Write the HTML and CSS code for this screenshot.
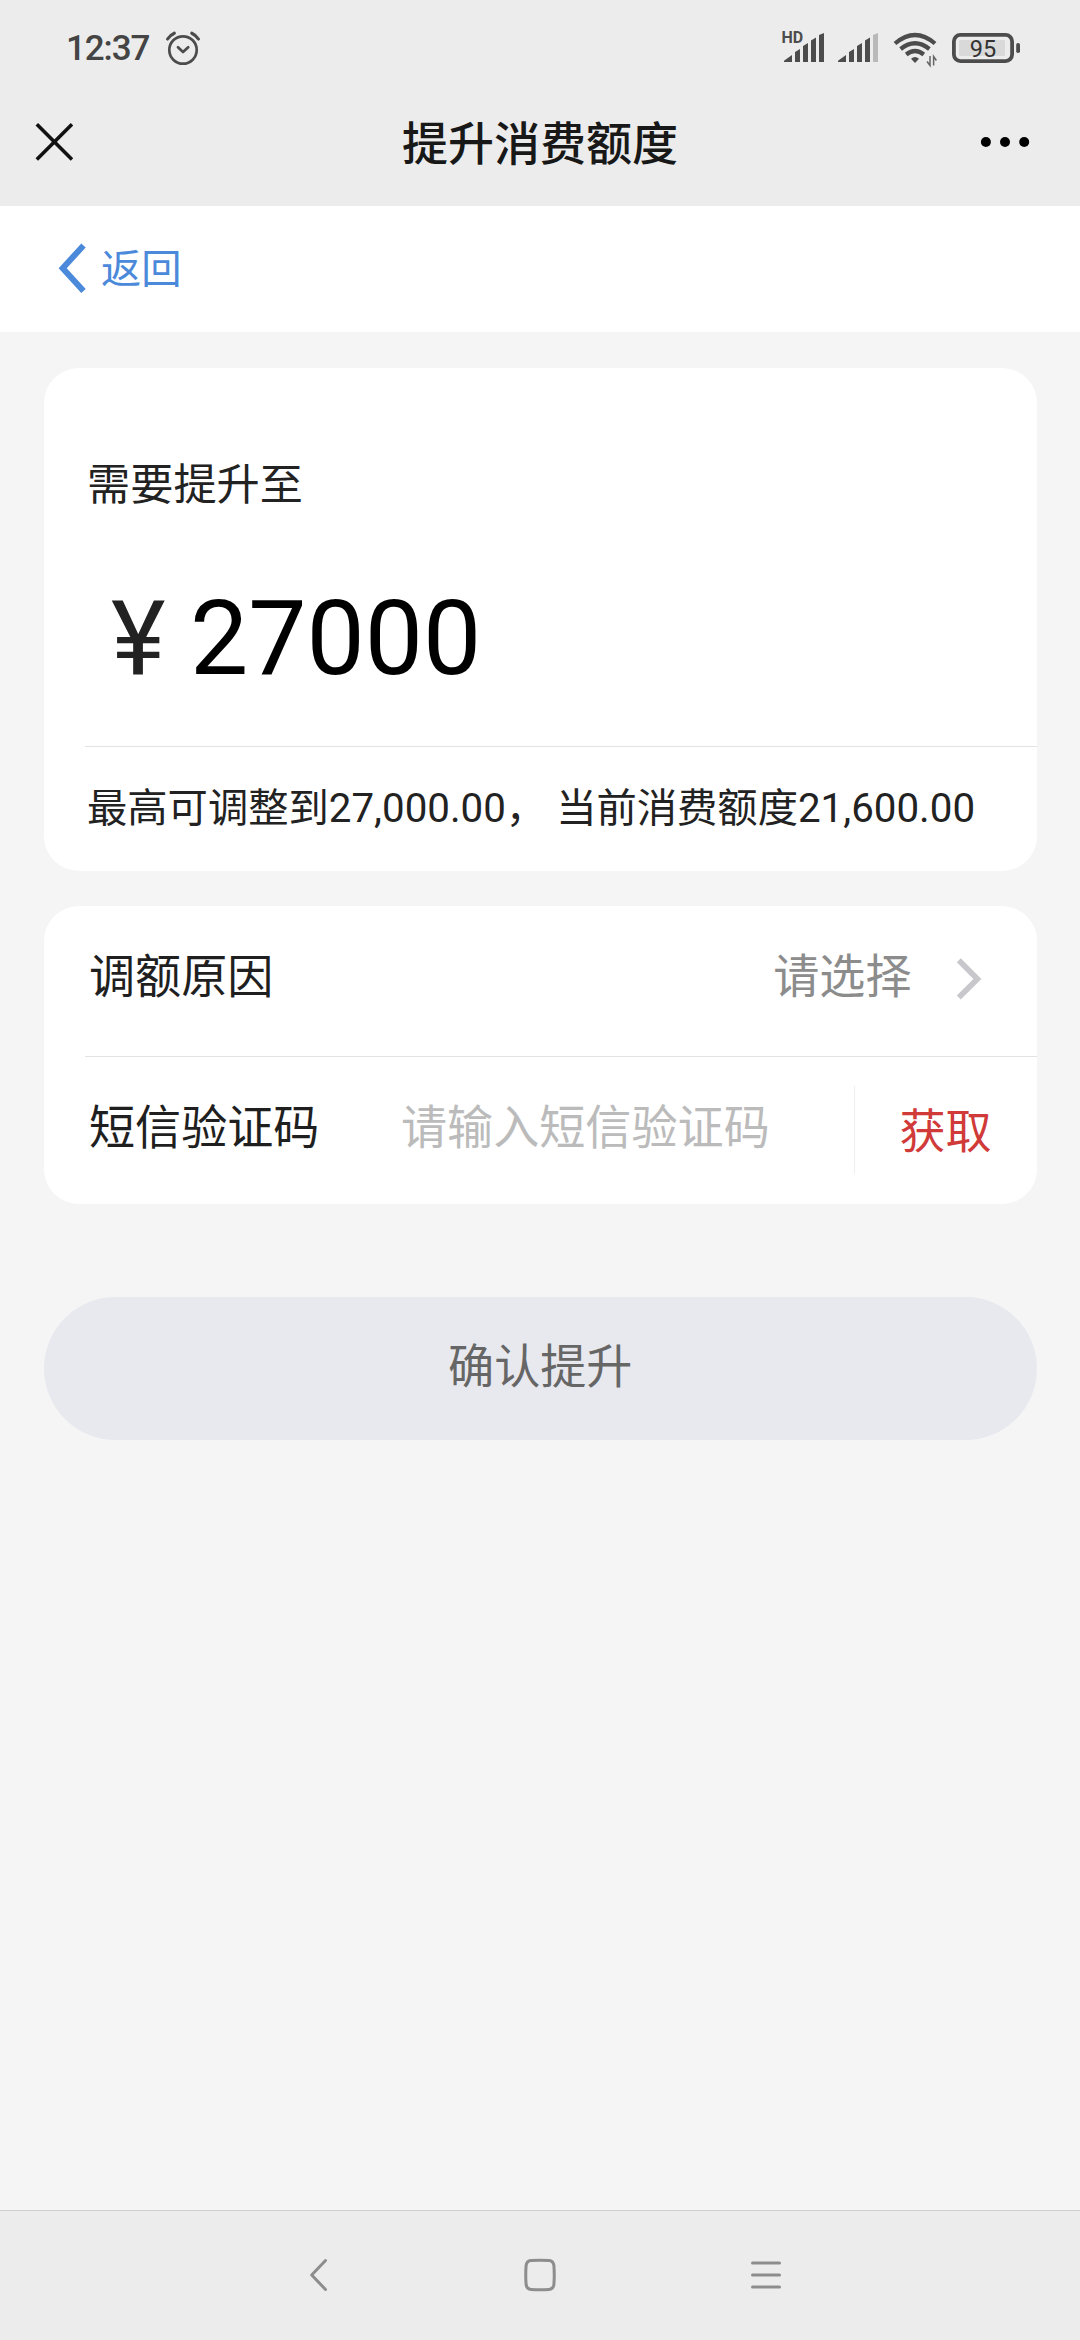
FILE: index.html
```html
<!DOCTYPE html>
<html lang="zh-CN">
<head>
<meta charset="UTF-8">
<title>提升消费额度</title>
<link rel="stylesheet" href="styles.css">
</head>
<body>
<div class="screen">
  <header class="top">
    <div class="status">
      <span class="time">12:37</span>
      <svg class="alarm" width="36" height="36" viewBox="0 0 36 36" fill="none" stroke="#4c4c4c" stroke-width="2.7" stroke-linecap="round">
        <circle cx="18" cy="20" r="13.7"/>
        <path d="M13 17.2L18 22L23.2 17.2" stroke-linejoin="round"/>
        <path d="M2.6 9Q5 5.2 9.3 3.2M26.8 3.2Q31 5.2 33.4 9" stroke-width="3.2"/>
      </svg>
      <svg class="indicators" width="240" height="40" viewBox="0 0 240 40">
        <g fill="#4c4c4c">
          <text class="hd" x="1.5" y="15">HD</text>
          <path d="M4 34V32.8L12 27V34ZM15 34V24L20 21V34ZM23 34V18L28 15V34ZM31 34V12.6L36 9.6V34ZM39 34V7L44 5V34Z"/>
          <path d="M58 34V32.8L66 27V34ZM69 34V24L74 21V34ZM77 34V18L82 15V34ZM85 34V12.6L90 9.6V34Z"/>
        </g>
        <path d="M93 34V7L98 5V34Z" fill="#b9b9b9"/>
        <g fill="none" stroke="#4c4c4c" stroke-width="4.2">
          <path d="M115 15.5Q135 -1.5 155 15.5"/>
          <path d="M120.6 21Q135 9.5 149.4 21"/>
          <path d="M126.2 26.5Q135 19.5 143.8 26.5"/>
        </g>
        <path d="M131 30.8Q135 27.2 139 30.8L135 35Z" fill="#4c4c4c"/>
        <path d="M150 28V37.5L147 33.5M153.6 37.5V28.5L156.4 32.5" fill="none" stroke="#666" stroke-width="1.5"/>
        <rect x="173.9" y="6.9" width="58.2" height="26.2" rx="6.5" fill="none" stroke="#4c4c4c" stroke-width="3.8"/>
        <rect x="179" y="12" width="46" height="16" rx="1.5" fill="#d9d9d9"/>
        <rect x="236.2" y="15" width="3.8" height="10" rx="1.8" fill="#4c4c4c"/>
        <text class="level" x="203" y="28.7" text-anchor="middle">95</text>
      </svg>
    </div>
    <div class="titlebar">
      <svg class="close" width="38" height="38" viewBox="0 0 38 38" fill="none" stroke="#111" stroke-width="3.6"><path d="M1.8 1.3L37 36.6M37 1.3L1.8 36.6"/></svg>
      <h1 class="title">提升消费额度</h1>
      <svg class="more" width="50" height="12" viewBox="0 0 50 12"><circle cx="5.9" cy="6" r="5"/><circle cx="25" cy="6" r="5"/><circle cx="44.2" cy="6" r="5"/></svg>
    </div>
  </header>

  <nav class="back">
    <svg width="28" height="50" viewBox="0 0 28 50" fill="none" stroke="#4b89da" stroke-width="6"><path d="M25.5 2.5L4.7 25.2L25.5 48"/></svg>
    <span>返回</span>
  </nav>

  <main class="content">
    <section class="card">
      <p class="caption">需要提升至</p>
      <div class="amount"><span class="yen">¥</span><span class="value">27000</span></div>
      <p class="hint">最高可调整到27,000.00，&nbsp;当前消费额度21,600.00</p>
    </section>

    <section class="card">
      <div class="row reason">
        <span class="label">调额原因</span>
        <span class="select">请选择</span>
        <svg width="26" height="42" viewBox="0 0 26 42" fill="none" stroke="#c7c7cc" stroke-width="5.6"><path d="M2.8 2.2L21.4 21L2.8 39.6"/></svg>
      </div>
      <div class="row sms">
        <span class="label">短信验证码</span>
        <span class="placeholder">请输入短信验证码</span>
        <span class="fetch">获取</span>
      </div>
    </section>

    <div class="submit">确认提升</div>
  </main>

  <footer class="navbar">
    <svg width="20" height="36" viewBox="0 0 20 36"><path d="M16.5 2.5L2.7 17L16.5 31.5"/></svg>
    <svg width="36" height="36" viewBox="0 0 36 36"><path d="M9 2.6Q18 1.8 27 2.6Q31.3 3 31.9 7.5Q32.6 17 31.9 26.5Q31.3 31 27 31.4Q18 32.2 9 31.4Q4.7 31 4.1 26.5Q3.4 17 4.1 7.5Q4.7 3 9 2.6Z"/></svg>
    <svg width="30" height="36" viewBox="0 0 30 36"><path d="M1.5 4.9H28.5M1.5 17H28.5M1.5 29H28.5"/></svg>
  </footer>
</div>
</body>
</html>
```
FILE: styles.css
```css
* { box-sizing: border-box; }

body {
  margin: 0;
  font-family: Roboto, "Noto Sans CJK SC", sans-serif;
  color: #222;
  background: #f5f5f5;
}

h1, p { margin: 0; }
svg { display: block; flex: none; }

.screen {
  width: 1080px;
  height: 2340px;
  display: flex;
  flex-direction: column;
}

/* System status and page title */
.top {
  height: 206px;
  background: #ececec;
}

.status {
  height: 96px;
  display: flex;
  align-items: center;
  padding: 0 60px 0 66px;
}

.time {
  width: 82px;
  padding-top: 2px;
  font-size: 35px;
  line-height: 40px;
  font-weight: 500;
  letter-spacing: -1.1px;
  color: #444;
  white-space: nowrap;
}

.alarm { margin-left: 17px; }
.indicators { margin-left: auto; }
.hd { font: 700 16px Roboto, sans-serif; }
.level { font: 400 23.5px Roboto, sans-serif; fill: #333; }

.titlebar {
  height: 92px;
  display: grid;
  grid-template-columns: 50px 1fr 50px;
  align-items: center;
  padding: 0 50px 0 35px;
}

.title {
  padding: 4px 0 0 15px;
  font-size: 46px;
  line-height: 60px;
  font-weight: 500;
  text-align: center;
  color: #181818;
}

.back {
  height: 126px;
  display: flex;
  align-items: center;
  gap: 15px;
  padding: 0 58px 3px;
  background: #fff;
  color: #4b89da;
  font-size: 40.3px;
  line-height: 60px;
}
.back span { padding-top: 4px; }

/* Form */
.content {
  flex: 1;
  padding: 36px 43.5px 0 44px;
}

.card {
  margin-bottom: 35px;
  padding-left: 41px;
  background: #fff;
  border-radius: 35px;
}

.caption {
  padding: 88px 0 0 2px;
  font-size: 43.2px;
  line-height: 60px;
}

.amount {
  height: 231px;
  display: flex;
  padding: 63px 0 0 26px;
  border-bottom: 1px solid #e3e3e3;
  font-size: 103.7px;
  line-height: 120px;
}
.yen { width: 79px; }
.value { color: #000; }

.hint {
  height: 124px;
  padding-left: 2px;
  font-size: 40.3px;
  line-height: 124px;
  white-space: nowrap;
}

.row {
  display: flex;
  align-items: center;
  font-size: 46.1px;
  line-height: 60px;
}

.reason {
  height: 150.5px;
  padding: 0 55px 7px 4px;
  border-bottom: 1px solid #e3e3e3;
}
.label { color: #1f1f1f; }
.select { margin-left: auto; margin-right: 44px; color: #8c8c8c; }
.reason svg { margin-top: 3px; }

.sms {
  height: 147px;
  padding-left: 4px;
}
.sms .label, .placeholder { padding-bottom: 4px; }
.sms .label { width: 312px; }
.placeholder { color: #bbb; }
.fetch {
  height: 88px;
  margin: 0 0 0 auto;
  width: 183px;
  padding-left: 45px;
  border-left: 1px solid #eee;
  line-height: 92px;
  color: #d03a38;
}

.submit {
  height: 143.5px;
  margin-top: 93px;
  border-radius: 72px;
  background: #e8e9ee;
  color: #666;
  font-size: 46.1px;
  line-height: 140px;
  text-align: center;
}

/* System navigation */
.navbar {
  height: 130px;
  display: grid;
  grid-template-columns: 20px 36px 30px;
  justify-content: center;
  align-items: center;
  column-gap: 193px;
  padding-left: 9px;
  border-top: 1px solid #d0d0d0;
  background: #ececec;
}
.navbar path {
  fill: none;
  stroke: #8d8d8d;
  stroke-width: 3;
  stroke-linecap: round;
  stroke-linejoin: round;
}
```
